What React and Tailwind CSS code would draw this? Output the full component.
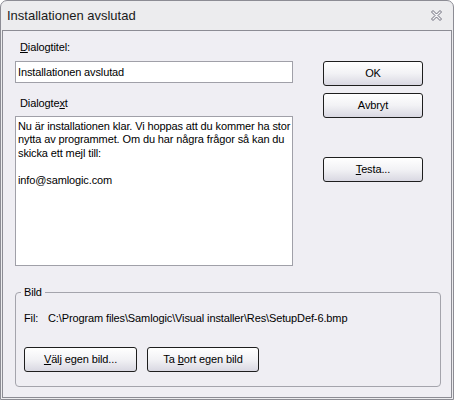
const font = { fontFamily: '"Liberation Sans", Arial, sans-serif' };

const Btn = ({ children, className = "" }) => (
  <div
    className={`flex items-center justify-center h-[25px] rounded-[3px] border border-[#1e1e1e] bg-gradient-to-b from-white via-[#f2f2f5] to-[#d9d8e2] text-[11px] text-black ${className}`}
  >
    {children}
  </div>
);

const CloseIcon = () => (
  <svg width="11" height="11" viewBox="0 0 11 11">
    <path
      d="M0.5 2 L2 0.5 L5.5 4 L9 0.5 L10.5 2 L7 5.5 L10.5 9 L9 10.5 L5.5 7 L2 10.5 L0.5 9 L4 5.5 Z"
      fill="#f4f4f6"
      stroke="#6a6a78"
      strokeWidth="1"
      strokeLinejoin="round"
    />
  </svg>
);

export default function App() {
  return (
    <div style={font} className="w-[454px] h-[400px] bg-white">
      <div className="w-[454px] h-[400px] flex flex-col rounded-t-[7px] border border-[#8c8c94] bg-[#ececee]">
        {/* Title bar */}
        <div className="h-[29px] flex items-center justify-between pl-[6px] pr-[11px]">
          <span className="text-[13px] text-[#1a1a1a]">Installationen avslutad</span>
          <CloseIcon />
        </div>

        {/* Client area */}
        <div className="flex-1 mx-[1px] mb-[1px] border border-[#8c8c94] bg-[#efeef3] flex flex-col text-[11px] tracking-[-0.12px] text-black">
          <div className="flex">
            <div className="w-[278px] ml-[12px] pt-[10px]">
              <div className="h-[13px] leading-[13px] pl-[5px]">
                <span className="underline">D</span>ialogtitel:
              </div>
              <div className="mt-[7px] h-[22px] border border-[#a0a0a8] bg-white pl-[2px] leading-[20px]">
                Installationen avslutad
              </div>
              <div className="mt-[14px] h-[13px] leading-[13px] pl-[5px]">
                Dialogte<span className="underline">x</span>t
              </div>
              <div className="mt-[6px] h-[150px] border border-[#a0a0a8] bg-white pl-[2px] pt-[3px] leading-[13.4px] whitespace-nowrap">
                <div>Nu är installationen klar. Vi hoppas att du kommer ha stor</div>
                <div>nytta av programmet. Om du har några frågor så kan du</div>
                <div>skicka ett mejl till:</div>
                <div>&nbsp;</div>
                <div>info@samlogic.com</div>
              </div>
            </div>
            <div className="ml-[30px] w-[100px] pt-[30px] flex flex-col">
              <Btn>OK</Btn>
              <Btn className="mt-[7px]">Avbryt</Btn>
              <Btn className="mt-[39px]">
                <span>
                  <span className="underline">T</span>esta...
                </span>
              </Btn>
            </div>
          </div>

          {/* Bild group */}
          <div className="relative mt-[26px] ml-[12px] w-[426px] h-[95px] rounded-[4px] border border-[#a4a4ac]">
            <div className="absolute -top-[7px] left-[5px] px-[3px] bg-[#efeef3] leading-[13px]">Bild</div>
            <div className="flex pt-[19px] pl-[8px] leading-[13px]">
              <span className="w-[24px]">Fil:</span>
              <span>C:\Program files\Samlogic\Visual installer\Res\SetupDef-6.bmp</span>
            </div>
            <div className="flex gap-[10px] mt-[22px] ml-[8px]">
              <Btn className="w-[113px]">
                <span>
                  <span className="underline">V</span>älj egen bild...
                </span>
              </Btn>
              <Btn className="w-[112px]">
                <span>
                  Ta <span className="underline">b</span>ort egen bild
                </span>
              </Btn>
            </div>
          </div>
        </div>
      </div>
    </div>
  );
}
